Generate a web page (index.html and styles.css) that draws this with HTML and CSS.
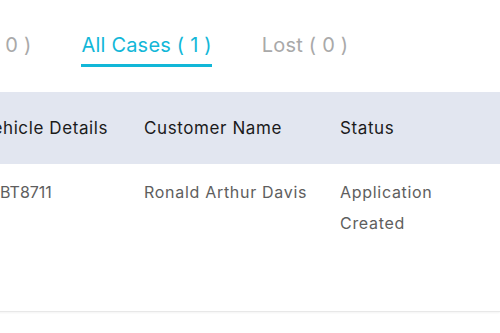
FILE: index.html
```html
<!DOCTYPE html>
<html>
<head>
<meta charset="utf-8">
<title>Cases</title>
<link rel="stylesheet" href="styles.css">
</head>
<body>
<div id="Screen">
    <div id="Tabs">
        <span class="tab">( 0 )</span>
        <span class="tab active">All Cases ( 1 )</span>
        <span class="tab">Lost ( 0 )</span>
    </div>
    <div id="CaseTable">
        <div class="row head">
            <div class="cell vehicle">Vehicle Details</div>
            <div class="cell">Customer Name</div>
            <div class="cell">Status</div>
        </div>
        <div class="row body">
            <div class="cell vehicle">BT8711</div>
            <div class="cell">Ronald Arthur Davis</div>
            <div class="cell">Application<br>Created</div>
        </div>
    </div>
</div>
</body>
</html>
```

FILE: styles.css
```css
html,body{
    margin:0;
    height:100%;
    background:#ffffff;
    font-family:"Inter","Noto Sans",sans-serif;
    overflow:hidden;
}
#Screen
{
    width:500px;
    height:333px;
    overflow:hidden;
}
#Tabs
{
    display:flex;
    gap:50px;
    margin-left:-8px;
    padding-top:31px;
    height:92px;
    box-sizing:border-box;
}
.tab
{
    font-size:20px;
    letter-spacing:0.2px;
    line-height:28px;
    color:#a9a9a9;
    white-space:nowrap;
    height:36px;
    box-sizing:border-box;
}
.tab.active
{
    color:#12b7d8;
    border-bottom:3px solid #12b7d8;
}
#CaseTable
{
    margin-left:-27px;
}
.row
{
    display:grid;
    grid-template-columns:155px 196px 1fr;
}
.row.head
{
    height:72px;
    background:#e2e6f0;
    align-items:center;
    color:#1b1b1b;
    font-size:17px;
    letter-spacing:0.6px;
}
.row.body
{
    height:148px;
    box-sizing:border-box;
    padding-top:13px;
    border-bottom:1px solid #e8e8e8;
    box-shadow:0 1px 2px rgba(0,0,0,0.05);
    color:#5e5e5e;
    font-size:16px;
    letter-spacing:0.7px;
    line-height:31px;
}
.cell
{
    padding-left:16px;
    white-space:nowrap;
}
.row.head .cell.vehicle
{
    padding-left:8px;
}
.row.body .cell.vehicle
{
    padding-left:27px;
    letter-spacing:0;
}
```
